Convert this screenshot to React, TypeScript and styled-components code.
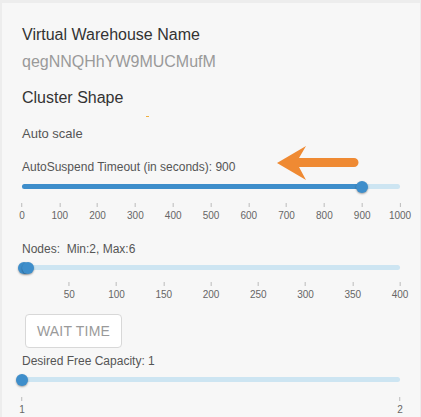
import React from "react";
import styled, { createGlobalStyle } from "styled-components";

const Global = createGlobalStyle`
  html, body { margin: 0; padding: 0; background: #ededed; }
  body { font-family: "Liberation Sans", Arial, sans-serif; }
`;

const Card = styled.div`
  position: relative;
  margin: 3px 1px 0 2px;
  height: 414px;
  background: #f7f7f7;
  padding: 0 20px 0 20px;
  box-sizing: border-box;
  overflow: hidden;
`;

const Heading = styled.div<{ $top: number }>`
  margin-top: ${(p) => p.$top}px;
  font-size: 16px;
  line-height: 20px;
  color: #333;
`;

const Value = styled.div`
  margin-top: 7px;
  font-size: 16px;
  line-height: 20px;
  color: #9a9a9a;
`;

const SubLabel = styled.div<{ $top: number; $size?: number }>`
  margin-top: ${(p) => p.$top}px;
  font-size: ${(p) => p.$size ?? 12}px;
  line-height: 16px;
  color: #555;
`;

const SliderBox = styled.div<{ $top: number }>`
  margin-top: ${(p) => p.$top}px;
  width: 378px;
`;

const Track = styled.div`
  position: relative;
  height: 5px;
  border-radius: 3px;
  background: #cde5f2;
`;

const Fill = styled.div`
  position: absolute;
  top: 0;
  bottom: 0;
  border-radius: 3px;
  background: #3e8ecb;
`;

const Thumb = styled.div`
  position: absolute;
  top: 50%;
  width: 12px;
  height: 12px;
  margin: -6px 0 0 -6px;
  border-radius: 50%;
  background: #3e8ecb;
  box-shadow: 0 1px 2px rgba(0, 0, 0, 0.35);
`;

const Scale = styled.div<{ $gap: number }>`
  position: relative;
  height: 22px;
  margin-top: ${(p) => p.$gap}px;
`;

const Tick = styled.div`
  position: absolute;
  top: 0;
  display: flex;
  flex-direction: column;
  align-items: center;
  transform: translateX(-50%);
`;

const TickLine = styled.div`
  width: 1px;
  height: 4px;
  background: #bbb;
`;

const TickLabel = styled.div`
  margin-top: 3px;
  font-size: 10px;
  line-height: 12px;
  color: #666;
`;

const Button = styled.button`
  display: block;
  margin: 10px 0 0 3px;
  width: 97px;
  height: 34px;
  padding: 0;
  background: #fff;
  border: 1px solid #d8d8d8;
  border-radius: 4px;
  font-family: "Liberation Sans", Arial, sans-serif;
  font-size: 14px;
  color: #9a9a9a;
  letter-spacing: 0.2px;
`;

const Arrow = styled.svg`
  position: absolute;
  left: 0;
  top: 0;
  pointer-events: none;
`;

const Speck = styled.span`
  position: absolute;
  left: 144px;
  top: 113px;
  width: 3px;
  height: 1px;
  background: #f0b040;
`;

type SliderProps = {
  min: number;
  max: number;
  values: number[];
  ticks: { v: number; label: string }[];
  top: number;
  scaleGap: number;
};

const Slider = ({ min, max, values, ticks, top, scaleGap }: SliderProps) => {
  const pct = (v: number) => ((v - min) / (max - min)) * 100;
  const lo = values.length > 1 ? pct(values[0]) : 0;
  const hi = pct(values[values.length - 1]);
  return (
    <SliderBox $top={top}>
      <Track>
        <Fill style={{ left: `${lo}%`, width: `${hi - lo}%` }} />
        {values.map((v, i) => (
          <Thumb key={i} style={{ left: `${pct(v)}%` }} />
        ))}
      </Track>
      <Scale $gap={scaleGap}>
        {ticks.map((t) => (
          <Tick key={t.v} style={{ left: `${pct(t.v)}%` }}>
            <TickLine />
            <TickLabel>{t.label}</TickLabel>
          </Tick>
        ))}
      </Scale>
    </SliderBox>
  );
};

const range = (from: number, to: number, step: number) => {
  const out: { v: number; label: string }[] = [];
  for (let v = from; v <= to; v += step) out.push({ v, label: String(v) });
  return out;
};

export default function App() {
  return (
    <>
      <Global />
      <Card>
        <Heading $top={22}>Virtual Warehouse Name</Heading>
        <Value>qegNNQHhYW9MUCMufM</Value>
        <Heading $top={16}>Cluster Shape</Heading>
        <SubLabel $top={18} $size={13}>Auto scale</SubLabel>
        <SubLabel $top={17}>AutoSuspend Timeout (in seconds): 900</SubLabel>
        <Slider
          min={0}
          max={1000}
          values={[900]}
          ticks={range(0, 1000, 100)}
          top={9}
          scaleGap={14}
        />
        <SubLabel $top={16}>Nodes:&nbsp; Min:2, Max:6</SubLabel>
        <Slider
          min={0}
          max={400}
          values={[2, 6]}
          ticks={range(50, 400, 50)}
          top={8}
          scaleGap={12}
        />
        <Button>WAIT TIME</Button>
        <SubLabel $top={5}>Desired Free Capacity: 1</SubLabel>
        <Slider
          min={1}
          max={2}
          values={[1]}
          ticks={range(1, 2, 1)}
          top={8}
          scaleGap={15}
        />
        <Speck />
        <Arrow width="421" height="417" viewBox="0 0 421 417">
          <path
            d="M275 160 L304 143 L297 155 L352 155 A4.5 4.5 0 0 1 352 164 L297 164 L304 177 Z"
            fill="#ef8a33"
          />
        </Arrow>
      </Card>
    </>
  );
}
